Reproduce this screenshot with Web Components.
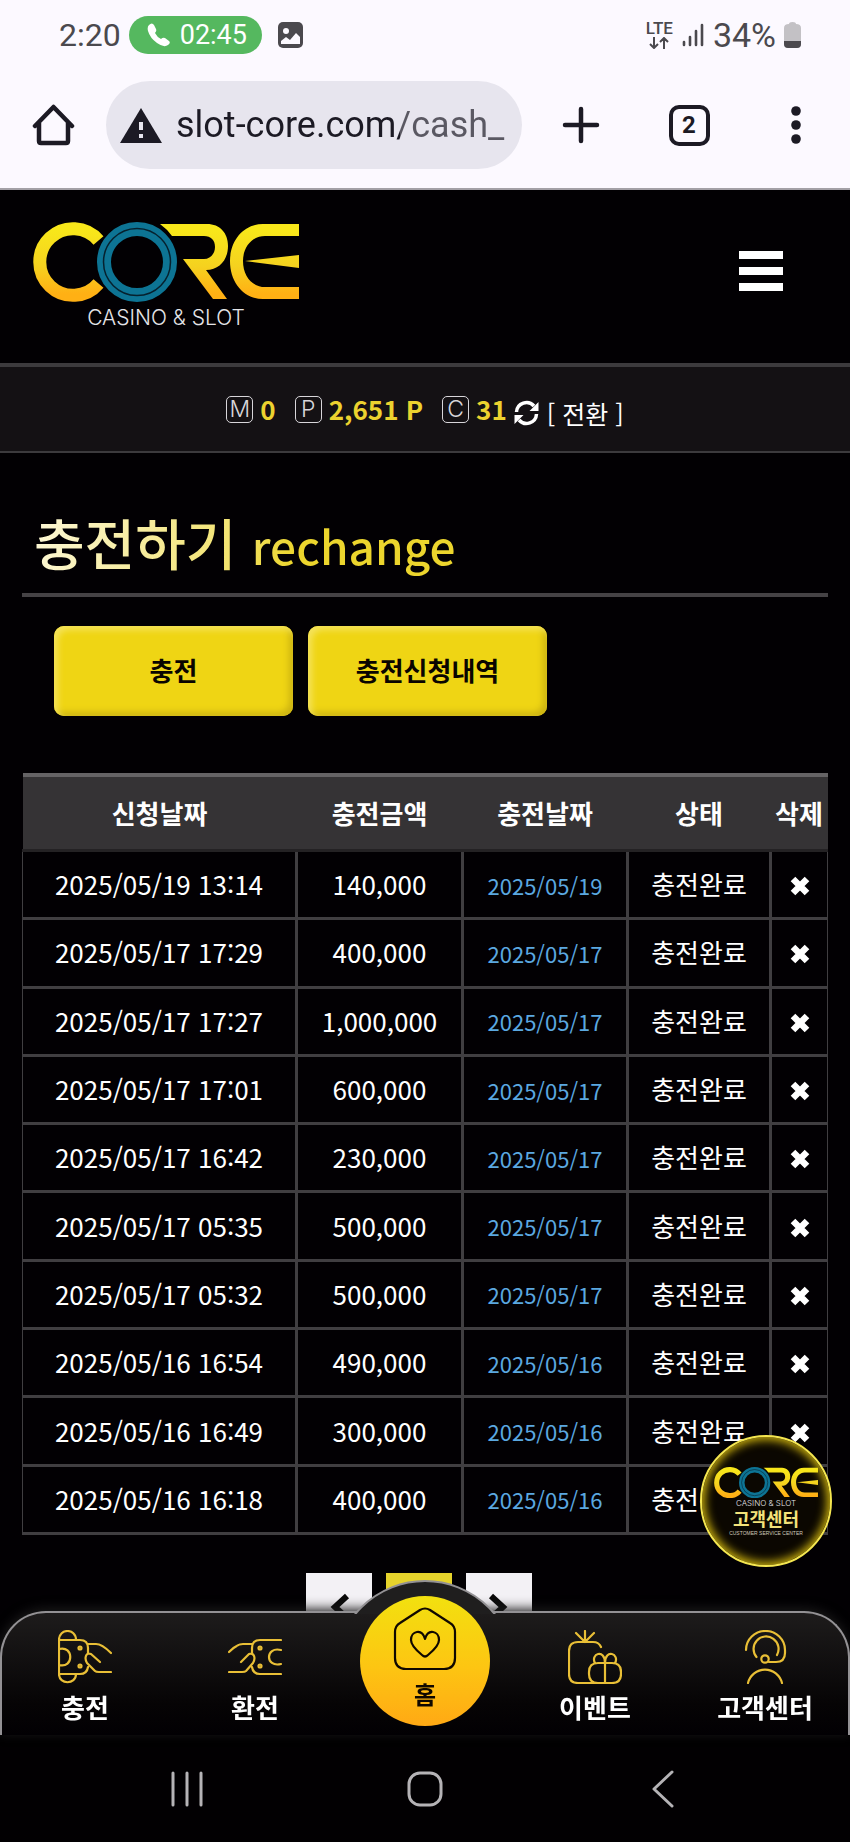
<!DOCTYPE html>
<html lang="ko">
  <head>
    <meta charset="utf-8">
    <meta name="viewport" content="width=device-width, initial-scale=1">
    <title>CORE CASINO &amp; SLOT</title>
    <style>
      body {
        margin: 0;
        background: #020003;
        color: #fff;
        font-family: "Noto Sans CJK KR", "Noto Sans", sans-serif;
        font-size: 26px;
      }
    </style>
  </head>
  <body>
    <status-bar></status-bar>
    <browser-bar></browser-bar>
    <site-header></site-header>
    <wallet-bar></wallet-bar>
    <page-title>충전하기 <span slot="sub">rechange</span></page-title>
    <tab-buttons></tab-buttons>
    <charge-table></charge-table>
    <page-nav></page-nav>
    <service-badge></service-badge>
    <bottom-dock></bottom-dock>

    <script>
      // Base class: opens the shadow root and fills it
      class BaseElement extends HTMLElement {
        constructor() {
          super();
          this.attachShadow({ mode: "open" });
          this.shadowRoot.innerHTML = this.render();
        }
      }

      // Phone status bar
      class StatusBar extends BaseElement {
        render() {
          return `
          <style>
            :host {
              display: flex;
              align-items: center;
              justify-content: space-between;
              height: 70px;
              padding: 0 49px 0 59px;
              background: #fcf9ff;
              color: #4b494e;
              font: 32px Roboto, sans-serif;
            }
            div { display: flex; align-items: center; gap: 8px; }
            svg { display: block; }
            .call {
              height: 38px;
              padding: 0 15px 0 18px;
              gap: 10px;
              border-radius: 19px;
              background: #55b85f;
              color: #fff;
              font-size: 27px;
            }
            .left .pic { margin-left: 8px; }
            .lte {
              flex-direction: column;
              gap: 2px;
              font-size: 17px;
              line-height: 14px;
              font-weight: 500;
            }
            .battery { font-size: 34px; }
          </style>
          <div class="left">
            <span>2:20</span>
            <div class="call">
              <svg width="23" height="24" viewBox="0 0 23 24"><path fill="#fff" d="M2 2Q5-1 7 2L9 6Q10 8 8 10Q10 14 14 16Q16 14 18 15L22 18Q24 20 21 22Q17 25 10 20Q3 15 1 8Q0 4 2 2Z"/></svg>
              <span>02:45</span>
            </div>
            <svg class="pic" width="25" height="26" viewBox="0 0 25 26"><rect width="25" height="26" rx="5" fill="#4b494e"/><circle cx="8" cy="9" r="3" fill="#fcf9ff"/><path d="M3 22V19L8 15L12 18L18 11L22 15V22Z" fill="#fcf9ff"/></svg>
          </div>
          <div>
            <div class="lte">
              <span>LTE</span>
              <svg width="20" height="12" viewBox="0 0 20 12" fill="none" stroke="#4b494e" stroke-width="2"><path d="M5 0V11M1 7L5 11L9 7M15 12V1M11 5L15 1L19 5"/></svg>
            </div>
            <svg width="24" height="24" viewBox="0 0 24 24" stroke="#4b494e" stroke-width="2.6" stroke-linecap="round"><path d="M3 19V22M9 14V22M15 8V22M21 2V22"/></svg>
            <span class="battery">34%</span>
            <svg width="17" height="26" viewBox="0 0 17 26"><path d="M5 2Q5 0 8.500 0T12 2Q17 2 17 6V22Q17 26 13 26H4Q0 26 0 22V6Q0 2 5 2Z" fill="#c3c1c5"/><path d="M0 19H17V22Q17 26 13 26H4Q0 26 0 22Z" fill="#4b494e"/></svg>
          </div>`;
        }
      }

      // Browser toolbar with the address
      class BrowserBar extends BaseElement {
        render() {
          return `
          <style>
            :host {
              display: flex;
              align-items: center;
              height: 98px;
              padding: 6px 36px 14px 32px;
              background: #fcf9ff;
              border-bottom: 2px solid #a3a0a6;
              color: #1c1a24;
            }
            .address {
              display: flex;
              align-items: center;
              flex: 1;
              min-width: 0;
              height: 88px;
              margin: 0 40px 0 31px;
              padding: 0 14px;
              gap: 14px;
              box-sizing: border-box;
              border-radius: 44px;
              background: #e7e5ee;
            }
            /* The path after the host name is dimmer */
            input {
              flex: 1;
              min-width: 0;
              padding: 0;
              border: 0;
              background: linear-gradient(90deg, #1c1a24 224px, #5a5862 224px);
              -webkit-background-clip: text;
              background-clip: text;
              color: transparent;
              font: 36px Roboto, sans-serif;
            }
            .actions { display: flex; align-items: center; justify-content: space-between; width: 252px; }
            button { display: block; padding: 0; border: 0; background: none; color: inherit; }
            .tabs {
              width: 41px;
              height: 41px;
              border: 4px solid #1c1a24;
              border-radius: 10px;
              font: bold 24px Roboto, sans-serif;
            }
            svg { display: block; flex: none; }
          </style>
          <button aria-label="Home"><svg width="43" height="42" viewBox="0 0 43 42" fill="none" stroke="#1c1a24" stroke-width="4.500" stroke-linecap="round" stroke-linejoin="round"><path d="M3 22L21.500 3L40 22M7 19V37Q7 39 9 39H34Q36 39 36 37V19"/></svg></button>
          <div class="address">
            <svg width="42" height="35" viewBox="0 0 42 35"><path d="M21 0L42 35H0Z" fill="#1c1a24"/><path d="M21 14V22M21 26V30" stroke="#e7e5ee" stroke-width="4"/></svg>
            <input type="text" aria-label="Address" value="slot-core.com/cash_">
          </div>
          <div class="actions">
            <button aria-label="New tab"><svg width="38" height="38" viewBox="0 0 38 38" stroke="#1c1a24" stroke-width="4.500" stroke-linecap="round"><path d="M19 3V35M3 19H35"/></svg></button>
            <button class="tabs">2</button>
            <button aria-label="Menu"><svg width="36" height="38" viewBox="0 0 36 38" fill="#1c1a24"><circle cx="18" cy="5" r="4.800"/><circle cx="18" cy="19" r="4.800"/><circle cx="18" cy="33" r="4.800"/></svg></button>
          </div>`;
        }
      }

      // Brand mark, scales with its host
      class BrandLogo extends BaseElement {
        render() {
          return `
          <style>
            :host { display: block; width: 266px; text-align: center; }
            svg { display: block; width: 100%; }
            span {
              display: block;
              color: #e4e4e8;
              font: 300 var(--tag-size, 21px)/1 Inter, sans-serif;
              padding-top: var(--tag-gap, 5px);
            }
          </style>
          <svg viewBox="0 0 266 80" role="img" aria-label="CORE">
            <defs>
              <linearGradient id="gold" gradientUnits="userSpaceOnUse" x1="0" y1="0" x2="0" y2="80">
                <stop offset="0.100" stop-color="#f8e71a"/>
                <stop offset="0.550" stop-color="#f5d21f"/>
                <stop offset="0.900" stop-color="#ffb014"/>
              </linearGradient>
            </defs>
            <path fill="none" stroke="url(#gold)" stroke-width="13" d="M65.500 18.500A33.300 33.300 0 1 0 65.500 61.500"/>
            <circle cx="104" cy="40" r="33" fill="none" stroke="#0d7494" stroke-width="14"/>
            <circle cx="104" cy="40" r="33.500" fill="none" stroke="#06212e" stroke-width="1.500"/>
            <path fill="url(#gold)" d="M127 2H174C187 2 195 11 195 24C195 37 187 48 173 48L194 77H180L150 37H171C178 37 182 31 182 25C182 18 178 14 171 14H139Q134 7 127 2Z"/>
            <path fill="url(#gold)" d="M266 2V14H232C219 14 210 25 210 39C210 54 219 65 232 65H266V77H230C211 77 197 61 197 39C197 18 211 2 230 2Z"/>
            <path fill="url(#gold)" d="M212 39L266 33V46Z"/>
          </svg>
          <span>CASINO &amp; SLOT</span>`;
        }
      }

      class SiteHeader extends BaseElement {
        render() {
          return `
          <style>
            :host {
              display: flex;
              align-items: flex-start;
              justify-content: space-between;
              height: 141px;
              padding: 32px 67px 0 33px;
            }
            button {
              display: flex;
              flex-direction: column;
              gap: 8px;
              width: 44px;
              margin-top: 29px;
              padding: 0;
              border: 0;
              background: none;
            }
            i { width: 100%; height: 8px; background: #fff; }
          </style>
          <brand-logo></brand-logo>
          <button aria-label="메뉴"><i></i><i></i><i></i></button>`;
        }
      }

      // Money, point and coupon balances
      class WalletBar extends BaseElement {
        render() {
          return `
          <style>
            :host {
              display: flex;
              align-items: center;
              justify-content: center;
              height: 84px;
              gap: 7px;
              background: #141114;
              border-top: 4px solid #3c3a3d;
              border-bottom: 2px solid #3c3a3d;
            }
            i {
              width: 25px;
              height: 25px;
              border: 1px solid #d8d6da;
              border-radius: 5px;
              color: #d8d6da;
              font: 300 23px/25px Inter, sans-serif;
              text-align: center;
            }
            b { color: #ecd22f; line-height: 40px; }
            .wide { margin-right: 12px; }
            button {
              display: flex;
              align-items: center;
              gap: 8px;
              padding: 8px 0 0;
              border: 0;
              background: none;
              color: #fff;
              font: inherit;
              font-size: 25px;
              line-height: 34px;
            }
          </style>
          <i>M</i><b class="wide">0</b>
          <i>P</i><b class="wide">2,651 P</b>
          <i>C</i><b>31</b>
          <button>
            <svg width="25" height="26" viewBox="0 0 25 26" fill="none" stroke="#fff" stroke-width="3.500"><path d="M2.500 12A10 10 0 0 1 20 6M22.500 14A10 10 0 0 1 5 20"/><path d="M24.500 2V11H15.500ZM0.500 24V15H9.500Z" fill="#fff" stroke="none"/></svg>
            [ 전환 ]
          </button>`;
        }
      }

      class PageTitle extends BaseElement {
        render() {
          return `
          <style>
            :host {
              display: block;
              margin: 0 22px;
              padding: 48px 12px 8px;
              border-bottom: 4px solid #454245;
            }
            h1 {
              display: inline-block;
              margin: 0;
              font-size: 55px;
              font-weight: 500;
              line-height: 80px;
              color: transparent;
              background: linear-gradient(100deg, #fdf8d8, #f3e475 45%, #ecd52d 62%, #ecd52d);
              -webkit-background-clip: text;
              background-clip: text;
            }
            ::slotted(span) { font-size: 46px; }
          </style>
          <h1><slot></slot><slot name="sub"></slot></h1>`;
        }
      }

      class TabButtons extends BaseElement {
        render() {
          return `
          <style>
            :host { display: flex; gap: 15px; padding: 29px 54px 0; }
            button {
              width: 239px;
              height: 90px;
              padding: 0 0 4px;
              border: 0;
              border-radius: 10px;
              background: #efd514;
              box-shadow: inset 4px 4px 6px #f5e35a, inset -4px -4px 6px #cdb412;
              color: #0a0500;
              font: inherit;
              font-weight: 700;
            }
          </style>
          <button>충전</button>
          <button>충전신청내역</button>`;
        }
      }

      // Charge history
      class ChargeTable extends BaseElement {
        render() {
          const rows = [
            ["2025/05/19 13:14", "140,000"],
            ["2025/05/17 17:29", "400,000"],
            ["2025/05/17 17:27", "1,000,000"],
            ["2025/05/17 17:01", "600,000"],
            ["2025/05/17 16:42", "230,000"],
            ["2025/05/17 05:35", "500,000"],
            ["2025/05/17 05:32", "500,000"],
            ["2025/05/16 16:54", "490,000"],
            ["2025/05/16 16:49", "300,000"],
            ["2025/05/16 16:18", "400,000"],
          ];
          const body = rows.map(([date, amount]) => `
            <tr>
              <td>${date}</td>
              <td>${amount}</td>
              <td class="day">${date.split(" ")[0]}</td>
              <td>충전완료</td>
              <td><button aria-label="삭제"><svg width="20" height="20" viewBox="0 0 20 20" stroke="#fff" stroke-width="6.500"><path d="M3 3L17 17M17 3L3 17"/></svg></button></td>
            </tr>`).join("");
          return `
          <style>
            :host { display: block; margin: 57px 22px 0; }
            table {
              width: 100%;
              height: 762px;
              table-layout: fixed;
              border-collapse: collapse;
            }
            th, td { padding: 0 0 2px; text-align: center; white-space: nowrap; }
            th { height: 70px; background: #353335; border-top: 4px solid #656365; border-bottom: 3px solid #242224; }
            td { border: 3px solid #403e41; }
            td:first-child { border-left-width: 1px; }
            td:last-child { border-right-width: 1px; }
            .day { padding: 0; color: #5ba8e0; font-size: 22px; }
            button { padding: 12px 0 0; border: 0; background: none; }
            svg { display: block; }
          </style>
          <table>
            <colgroup><col><col style="width:166px"><col style="width:165px"><col style="width:143px"><col style="width:57px"></colgroup>
            <thead><tr><th>신청날짜</th><th>충전금액</th><th>충전날짜</th><th>상태</th><th>삭제</th></tr></thead>
            <tbody>${body}</tbody>
          </table>`;
        }
      }

      class PageNav extends BaseElement {
        render() {
          return `
          <style>
            :host {
              display: flex;
              justify-content: center;
              gap: 14px;
              padding: 38px 12px 200px 0;
            }
            button { width: 66px; height: 66px; padding: 0; border: 0; background: #f3f1f5; color: #0a0a0a; }
            .on { background: #e6d32c; }
            svg { display: block; margin: auto; }
          </style>
          <button aria-label="이전"><svg width="30" height="30" viewBox="0 0 30 30" fill="none" stroke="#0a0a0a" stroke-width="6"><path d="M23 5L11 16L23 27"/></svg></button>
          <button class="on" aria-label="1"></button>
          <button aria-label="다음"><svg width="30" height="30" viewBox="0 0 30 30" fill="none" stroke="#0a0a0a" stroke-width="6"><path d="M7 5L19 16L7 27"/></svg></button>`;
        }
      }

      // Floating customer service button
      class ServiceBadge extends BaseElement {
        render() {
          return `
          <style>
            :host { position: fixed; right: 18px; bottom: 275px; }
            a {
              display: flex;
              flex-direction: column;
              align-items: center;
              box-sizing: border-box;
              width: 132px;
              height: 132px;
              padding-top: 30px;
              border: 2px solid #f5e650;
              border-radius: 50%;
              background: #0b0701;
              box-shadow: inset 0 0 10px 3px #c9ae0c;
              text-decoration: none;
            }
            brand-logo { width: 104px; --tag-size: 8px; --tag-gap: 1px; }
            b { color: #f3e27a; font-size: 18px; line-height: 22px; }
            small { color: #cfcabb; font: 5px/8px "Liberation Sans", sans-serif; }
          </style>
          <a href="#"><brand-logo></brand-logo><b>고객센터</b><small>CUSTOMER SERVICE CENTER</small></a>`;
        }
      }

      // One entry of the bottom menu
      class DockItem extends BaseElement {
        render() {
          return `
          <style>
            :host { display: block; flex: 1; }
            a {
              display: flex;
              flex-direction: column;
              align-items: center;
              gap: 4px;
              padding-top: 19px;
              color: #fff;
              font-weight: 700;
              line-height: 38px;
              text-decoration: none;
            }
          </style>
          <a href="#"><slot name="icon"></slot><slot></slot></a>`;
        }
      }

      class BottomDock extends BaseElement {
        render() {
          return `
          <style>
            :host { position: fixed; left: 0; right: 0; bottom: 0; }
            nav {
              position: relative;
              display: flex;
              height: 124px;
              border-radius: 46px 46px 0 0;
              background: linear-gradient(#1e1c1c, #060405 75%, #020003);
              box-shadow: 0 -2px 12px #1c1c1c;
            }
            nav::before {
              content: "";
              position: absolute;
              inset: 0;
              border: 2px solid #939194;
              border-bottom: 0;
              border-radius: inherit;
              pointer-events: none;
            }
            nav svg { display: block; fill: none; stroke: #e9bf36; stroke-width: 2.200; stroke-linecap: round; stroke-linejoin: round; }
            .space { flex: 1; }
            /* Rim that rises over the bar behind the home button */
            .rim {
              position: absolute;
              left: 50%;
              top: -31px;
              width: 182px;
              height: 34px;
              margin-left: -91px;
              overflow: hidden;
            }
            .rim::before {
              content: "";
              display: block;
              box-sizing: border-box;
              height: 182px;
              border: 2px solid #939194;
              border-radius: 50%;
              background: #1f1e1e;
            }
            .home {
              position: absolute;
              left: 50%;
              top: -15px;
              display: flex;
              flex-direction: column;
              align-items: center;
              box-sizing: border-box;
              width: 130px;
              height: 130px;
              margin-left: -65px;
              padding-top: 11px;
              border-radius: 50%;
              background: linear-gradient(#f2e10f, #fdc512 55%, #ffa914);
              color: #100800;
              font-size: 24px;
              font-weight: 700;
              line-height: 46px;
              text-decoration: none;
            }
            nav .home svg { stroke: #100800; }
            .system {
              display: flex;
              align-items: center;
              justify-content: space-around;
              height: 107px;
              padding: 0 68px;
              background: #020002;
            }
            .system button { width: 44px; padding: 0; border: 0; background: none; }
            .system svg { display: block; margin: auto; fill: none; stroke: #b5b3b6; stroke-width: 3; stroke-linecap: round; stroke-linejoin: round; }
          </style>
          <nav>
            <div class="rim"></div>
            <dock-item>
              <svg slot="icon" width="54" height="54" viewBox="0 0 54 54"><path d="M1 10V44C1 55 18 55 18 44M1 10C1-2 18-2 18 10M1 10H22Q30 10 30 18V23M1 44H22Q29 44 30 37M1 19C16 15 16 39 1 35M30 14H38Q44 14 53 23M42 32L33 24C28 22 26 28 29 33L37 41Q38 42 41 42H53"/><circle cx="22" cy="18" r="1.500"/><circle cx="22" cy="36" r="1.500"/></svg>
              충전
            </dock-item>
            <dock-item>
              <svg slot="icon" width="54" height="54" viewBox="0 0 54 54"><path d="M53 10H32Q24 10 24 18V23M53 44H32Q25 44 24 37M53 20C37 16 37 38 53 34M24 14H15Q9 14 1 22M13 32L21 24C26 22 28 28 25 33L18 41Q17 42 14 42H1"/><circle cx="32" cy="18" r="1.500"/><circle cx="32" cy="36" r="1.500"/></svg>
              환전
            </dock-item>
            <div class="space"></div>
            <dock-item>
              <svg slot="icon" width="54" height="54" viewBox="0 0 54 54"><path d="M33 17Q31 12 25 12H10Q1 12 1 21V44Q1 53 10 53H44Q53 53 53 44V42Q53 33 44 33H30Q21 33 21 42V44Q21 53 30 53M17 1V12L8 3M17 12L26 3M37 53V33C37 18 22 24 27 33M37 33C37 18 52 24 47 33"/></svg>
              이벤트
            </dock-item>
            <dock-item>
              <svg slot="icon" width="54" height="54" viewBox="0 0 54 54"><path d="M8 20A19.500 19 0 0 1 47 20V23Q47 32 38 32H31M18.500 27A12.500 12.500 0 1 1 39 25M10 53A17.500 17.500 0 0 1 44 53"/><circle cx="27" cy="29" r="3.700"/></svg>
              고객센터
            </dock-item>
            <a class="home" href="#">
              <svg width="64" height="64" viewBox="0 0 64 64"><path d="M27 3Q32 0 37 3L57 16Q62 19 62 25V51Q62 62 51 62H13Q2 62 2 51V25Q2 19 7 16ZM32 32C29 21 18 24 18 33Q18 39 29 48Q32 51 35 48Q46 39 46 33C46 24 35 21 32 32Z"/></svg>
              홈
            </a>
          </nav>
          <div class="system">
            <button aria-label="Recents"><svg width="32" height="36" viewBox="0 0 32 36"><path d="M2 2V34M16 2V34M30 2V34"/></svg></button>
            <button aria-label="Home"><svg width="36" height="36" viewBox="0 0 36 36"><rect x="2" y="2" width="32" height="32" rx="11"/></svg></button>
            <button aria-label="Back"><svg width="22" height="38" viewBox="0 0 22 38"><path d="M20 2L2 19L20 36"/></svg></button>
          </div>`;
        }
      }

      customElements.define("status-bar", StatusBar);
      customElements.define("browser-bar", BrowserBar);
      customElements.define("brand-logo", BrandLogo);
      customElements.define("site-header", SiteHeader);
      customElements.define("wallet-bar", WalletBar);
      customElements.define("page-title", PageTitle);
      customElements.define("tab-buttons", TabButtons);
      customElements.define("charge-table", ChargeTable);
      customElements.define("page-nav", PageNav);
      customElements.define("service-badge", ServiceBadge);
      customElements.define("dock-item", DockItem);
      customElements.define("bottom-dock", BottomDock);
    </script>
  </body>
</html>
